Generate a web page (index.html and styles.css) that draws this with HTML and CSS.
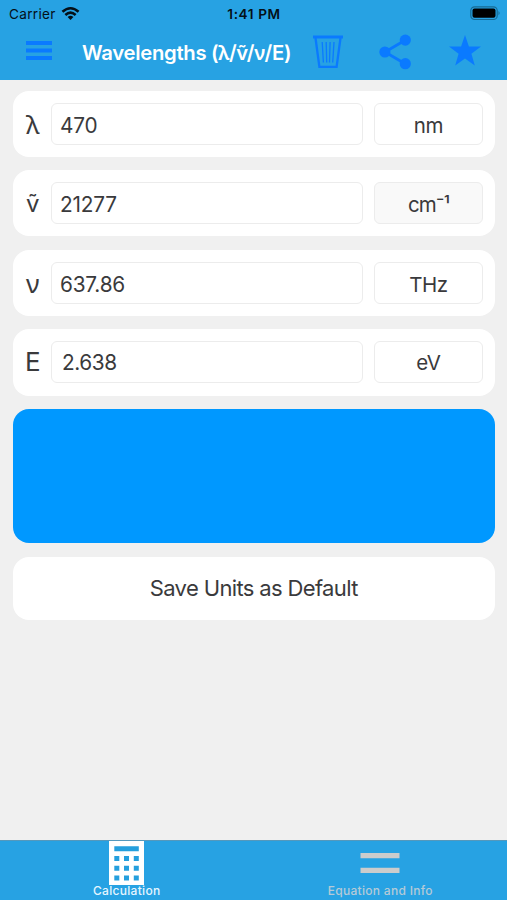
FILE: index.html
```
<!DOCTYPE html>
<html lang="en">
<head>
<meta charset="utf-8">
<title>Wavelengths</title>
<link rel="stylesheet" href="styles.css">
</head>
<body>
<div class="app">
  <header class="top">
    <div class="status">
      <div class="carrier"><span>Carrier</span>
        <svg width="19" height="15" viewBox="0 0 20 16"><g fill="none" stroke="#041018" stroke-width="2.7"><path d="M1.4 6.2Q10-1.5 18.6 6.2"/><path d="M4.5 9.6Q10 4.6 15.5 9.6"/></g><path d="M6.9 11.6Q10 9 13.1 11.6L10 14.8Z" fill="#041018"/></svg>
      </div>
      <time class="clock">1:41 PM</time>
      <svg class="battery" width="31" height="15" viewBox="0 0 31 15"><rect x=".8" y=".8" width="26.4" height="12.7" rx="3.8" fill="none" stroke="#176b94" stroke-width="1.2"/><rect x="2.5" y="2.4" width="23" height="9.4" rx="2" fill="#000"/><path d="M28.5 5q2.2 2.1 0 4.3Z" fill="#176b94"/></svg>
    </div>
    <nav class="bar">
      <svg class="menu" width="26" height="20" viewBox="0 0 26 20" fill="#0a7aff"><path d="M0 0h26v4H0zM0 7.5h26v4H0zM0 15h26v4H0z"/></svg>
      <h1 class="title">Wavelengths (<span class="greek">λ</span>/ṽ/<span class="greek">ν</span>/E)</h1>
      <svg class="trash" width="32" height="34" viewBox="0 0 32 34" fill="none" stroke="#0a7aff"><path d="M1 2H31" stroke-width="3"/><path d="M3.5 3L7.4 31.8H24.6L28.5 3" stroke-width="2.3"/><path d="M10.2 7L11.4 27.5M14.2 7L14.7 27.5M18.1 7L17.5 27.5M22 7L20.7 27.5" stroke-width="1.3"/></svg>
      <svg class="share" width="33" height="36" viewBox="0 0 33 36"><path d="M26.5 6L6 18L26.5 30" fill="none" stroke="#0a7aff" stroke-width="2.8"/><g fill="#0a7aff"><circle cx="26.3" cy="6.1" r="5.6"/><circle cx="5.9" cy="18" r="5.6"/><circle cx="26.3" cy="29.7" r="5.6"/></g></svg>
      <svg class="star" width="32" height="31" viewBox="0 0 32 31"><path d="M16 0L19.9 11.4H32L22.4 18.8L25.8 30.5L16 23.5L6.2 30.5L9.6 18.8L0 11.4H12.1Z" fill="#0a7aff"/></svg>
    </nav>
  </header>
  <main class="content">
    <section class="row"><label class="symbol">λ</label><div class="field">470</div><div class="unit">nm</div></section>
    <section class="row"><label class="symbol tilde">ṽ</label><div class="field">21277</div><div class="unit fixed">cm⁻¹</div></section>
    <section class="row"><label class="symbol">ν</label><div class="field">637.86</div><div class="unit">THz</div></section>
    <section class="row"><label class="symbol latin">E</label><div class="field last">2.638</div><div class="unit">eV</div></section>
    <div class="swatch"></div>
    <button class="save">Save Units as Default</button>
  </main>
  <footer class="tabs">
    <div class="tab active">
      <svg width="35" height="44" viewBox="0 0 35 44"><path d="M0 0h35v44H0z" fill="#fff"/><path d="M5.3 5.3h24.5v5H5.3zM5.3 15h5v5h-5zM15 15h5v5h-5zM24.8 15h5v5h-5zM5.3 24.8h5v5h-5zM15 24.8h5v5h-5zM24.8 24.8h5v5h-5zM5.3 34.5h5v5h-5zM15 34.5h5v5h-5zM24.8 34.5h5v5h-5z" fill="#259fdd"/></svg>
      <span>Calculation</span>
    </div>
    <div class="tab">
      <svg width="40" height="44" viewBox="0 0 40 44"><path d="M.5 12h39v5.3H.5zM.5 26.8h39v5.3H.5z" fill="#ccc"/></svg>
      <span class="info">Equation and Info</span>
    </div>
  </footer>
</div>
</body>
</html>
```
FILE: styles.css
```
* { box-sizing: border-box; }
body { margin: 0; font-family: Inter, "Noto Sans", sans-serif; color: #3a3a3c; }
.app { width: 507px; height: 900px; display: flex; flex-direction: column; background: #f0f0f0; overflow: hidden; }
svg { display: block; flex: none; }
.top { height: 79.5px; flex: none; background: #27a2e3; }
.status { height: 28px; display: grid; grid-template-columns: 1fr auto 1fr; align-items: center; padding: 0 6px 0 9px; color: #041018; font-size: 13.6px; letter-spacing: .3px; }
.carrier { display: flex; align-items: center; gap: 5px; }
.carrier svg { margin-top: -2px; }
.clock { font-weight: 600; font-size: 13.6px; letter-spacing: .6px; margin-left: -2px; }
.battery { justify-self: end; margin-top: -2px; }
.bar { height: 51px; display: flex; align-items: center; padding: 0 26px 3px; }
.menu { margin-top: -2px; }
.title { margin: 0 0 0 30px; width: 231px; color: #fff; font-size: 20.3px; font-weight: 600; letter-spacing: -.3px; white-space: nowrap; line-height: 28px; padding-top: 2px; }
.greek { font-family: "Noto Sans", sans-serif; font-size: 20px; letter-spacing: -.5px; }
.share { margin-left: 35px; }
.star { margin-left: 37px; margin-top: -3px; }
.content { flex: 1; display: flex; flex-direction: column; padding: 11px 12.5px 0 13px; }
.row { height: 66.4px; margin-bottom: 13.2px; border-radius: 16px; background: #fff; display: flex; align-items: center; padding: 0 11.5px 0 12px; }
.symbol { width: 26px; padding-left: 1px; font-family: "Noto Sans", sans-serif; font-size: 26px; line-height: 40px; }
.tilde { font-family: Inter, sans-serif; font-size: 24px; padding-top: 1px; }
.latin { font-family: Inter, sans-serif; padding: 0; }
.field, .unit { height: 42px; border: 1px solid #ececec; border-radius: 6px; font-size: 20.8px; line-height: 42px; letter-spacing: -.2px; }
.field { width: 312px; padding-left: 8px; padding-top: 1px; }
.last { padding: 0 0 0 10px; letter-spacing: -.4px; }
.unit { width: 109px; margin-left: auto; text-align: center; font-size: 20.5px; letter-spacing: -.4px; padding-top: 1px; }
.fixed { background: #f9f9f9; letter-spacing: -.9px; }
.last + .unit { padding-top: 0; }
.swatch { height: 134.5px; flex: none; border-radius: 16px; background: #0098ff; }
.save { height: 63px; margin-top: 13.5px; border: 0; border-radius: 16px; background: #fff; color: #3a3a3c; font: 22px Inter, sans-serif; letter-spacing: -.64px; }
.tabs { height: 60.5px; flex: none; display: flex; background: #27a2e3; border-top: 1px solid #5598bc; }
.tab { flex: 1; display: flex; flex-direction: column; align-items: center; color: #b5cad7; font-size: 12px; line-height: 12px; font-weight: 500; letter-spacing: .3px; }
.active { color: #e5f5ff; }
```
